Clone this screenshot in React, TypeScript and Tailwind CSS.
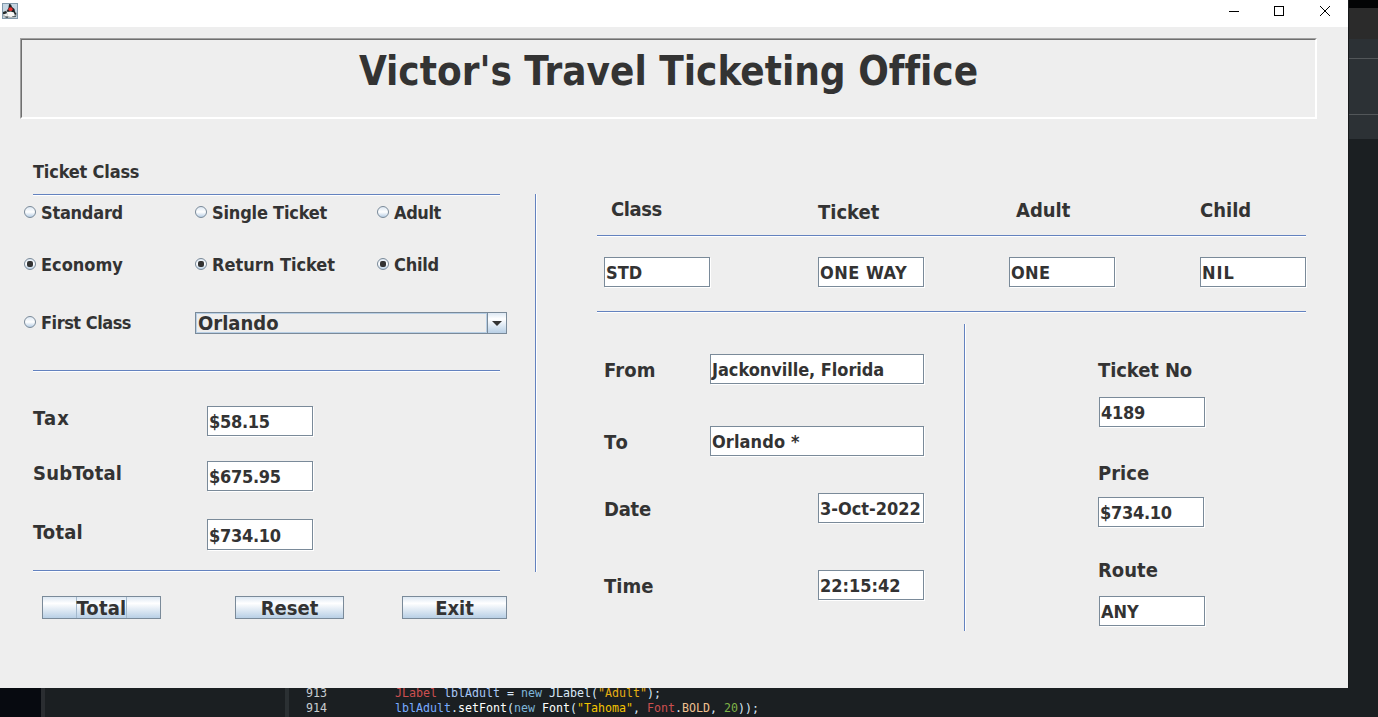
import type { ReactNode } from "react";

const ui = "font-['DejaVu_Sans_Condensed','DejaVu_Sans',sans-serif] [font-stretch:condensed] font-bold text-[#333] [font-variant-ligatures:none]";

function Rule({ className = "" }: { className?: string }) {
  return <div className={`h-0.5 shrink-0 border-t border-[#6382bf] bg-white ${className}`} />;
}

function Label({ children, className = "" }: { children: ReactNode; className?: string }) {
  return <div className={`h-6 shrink-0 whitespace-nowrap text-[20px] leading-6 ${className}`}>{children}</div>;
}

function Field({ value, className = "h-[30px] w-[106px] leading-[29px]" }: { value: string; className?: string }) {
  return (
    <div
      className={`shrink-0 overflow-hidden whitespace-nowrap border border-[#7a8a99] bg-white pl-px text-[18px] shadow-[1px_1px_0_#fff] ${className}`}
    >
      {value}
    </div>
  );
}

function Radio({ label, checked = false, className = "" }: { label: string; checked?: boolean; className?: string }) {
  return (
    <div className={`flex h-6 shrink-0 items-center gap-[5px] text-[18px] leading-6 whitespace-nowrap ${className}`}>
      <span className="flex size-3 items-center justify-center rounded-full border border-[#7a8a99] bg-linear-to-b from-[#dde8f3] via-white to-[#b8cfe5]">
        {checked && <span className="size-1.5 rounded-[2px] bg-[#333]" />}
      </span>
      <span className="pt-0.5">{label}</span>
    </div>
  );
}

function MetalButton({ label, focused = false, className = "" }: { label: string; focused?: boolean; className?: string }) {
  return (
    <button
      className={`flex h-[23px] shrink-0 justify-center border border-[#7a8a99] bg-linear-to-b from-[#dde8f3] via-white via-30% to-[#b8cfe5] text-[20px] leading-[22px] ${className}`}
    >
      <span className={focused ? "h-full border-x border-[#a3b8cc] tracking-[0.2px]" : "h-full"}>{label}</span>
    </button>
  );
}

function JavaIcon() {
  return (
    <svg width="16" height="16" viewBox="0 0 16 16">
      <rect x=".5" y=".5" width="15" height="15" fill="#c4d5e2" stroke="#8198aa" />
      <path d="M1 9 L5 7 L12 7 L15 10 V13 L12 15 H3 L1 13Z" fill="#aeb6ba" />
      <path d="M7 1 L9 1.5 L10 4 L12.5 6 L13 9 L14.5 11 L13 12 L11.5 9 H5.5 L5 7.5 L6.5 5Z" fill="#1c2224" />
      <path d="M1 9 L4 8 L5 9.5 L3 11 L1 11Z" fill="#252c2e" />
      <path d="M5 9 L9 8.5 L12 10 L12.5 13 L9 14 L6 13Z" fill="#f8f8f6" />
      <path d="M2 11 H5 L6 13 H3Z" fill="#eeefee" />
      <path d="M3 13.5 H6 V15 H4Z M10 13.5 L14 12.5 V14 H10Z" fill="#596367" />
      <ellipse cx="8.5" cy="6.2" rx="2.1" ry="1.9" fill="#e93030" />
    </svg>
  );
}

function TitleBar() {
  return (
    <div className="flex h-[27px] shrink-0 justify-between bg-white pt-[3px] pl-[2px]">
      <JavaIcon />
      <div className="flex pt-[3px] pr-[17px]">
        <svg width="102" height="11" viewBox="0 0 102 11" fill="none" stroke="#000" shapeRendering="crispEdges">
          <path d="M0 5.5H10M45.5 .5H54.5V9.5H45.5Z" />
          <path d="M91 0L101 10M101 0L91 10" shapeRendering="auto" />
        </svg>
      </div>
    </div>
  );
}

function TicketForm() {
  return (
    <div className="flex w-[535px] shrink-0 flex-col">
      <div className="mt-[41px] h-6 pl-[33px] text-[18px] leading-6 tracking-[-0.18px]">Ticket Class</div>
      <Rule className="mt-[10px] ml-[33px] w-[467px]" />
      <div className="mt-1 flex pl-6">
        <Radio label="Standard" className="w-[171px] tracking-[-0.25px]" />
        <Radio label="Single Ticket" className="w-[182px] tracking-[-0.2px]" />
        <Radio label="Adult" className="tracking-[-0.4px]" />
      </div>
      <div className="mt-7 flex pl-6">
        <Radio label="Economy" checked className="w-[171px]" />
        <Radio label="Return Ticket" checked className="w-[182px]" />
        <Radio label="Child" checked className="tracking-[-0.25px]" />
      </div>
      <div className="mt-[34px] flex items-end pl-6">
        <Radio label="First Class" className="w-[171px] tracking-[-0.48px]" />
        <div className="flex h-[22px] w-[312px] border border-[#7a8a99]">
          <div className="flex-1 border border-[#b8cfe5] pl-px text-[20px] leading-[19px]">Orlando</div>
          <div className="flex w-[19px] items-center justify-center border-l border-[#7a8a99] bg-linear-to-b from-[#dde8f3] via-white via-30% to-[#b8cfe5]">
            <svg width="10" height="5" viewBox="0 0 10 5">
              <path d="M0 0H10L5 5Z" fill="#333" />
            </svg>
          </div>
        </div>
      </div>
      <Rule className="mt-9 ml-[33px] w-[467px]" />
      <div className="mt-[34px] flex pl-[33px]">
        <Label className="w-[174px] tracking-[1.2px]">Tax</Label>
        <Field value="$58.15" className="h-[30px] w-[106px] leading-[29px] tracking-[-0.3px]" />
      </div>
      <div className="mt-[25px] flex pl-[33px]">
        <Label className="w-[174px] tracking-[0.2px]">SubTotal</Label>
        <Field value="$675.95" className="h-[30px] w-[106px] leading-[29px] tracking-[-0.28px]" />
      </div>
      <div className="mt-7 flex pl-[33px]">
        <Label className="mt-px w-[174px] tracking-[0.2px]">Total</Label>
        <Field value="$734.10" className="h-[31px] w-[106px] leading-[31px] tracking-[-0.28px]" />
      </div>
      <Rule className="mt-5 ml-[33px] w-[467px]" />
      <div className="mt-6 flex pl-[42px]">
        <MetalButton label="Total" focused className="w-[119px]" />
        <MetalButton label="Reset" className="ml-[74px] w-[109px]" />
        <MetalButton label="Exit" className="ml-[58px] w-[105px]" />
      </div>
    </div>
  );
}

function TicketSummary() {
  return (
    <div className="ml-[60px] flex w-[709px] flex-col pt-[78px]">
      <div className="flex h-[38px]">
        <Label className="w-[207px] pl-[14px] tracking-[-0.4px]">Class</Label>
        <Label className="mt-[3px] w-[198px] pl-[14px]">Ticket</Label>
        <Label className="mt-px w-[198px] pl-[14px]">Adult</Label>
        <Label className="mt-px">Child</Label>
      </div>
      <Rule />
      <div className="mt-5 flex pl-[7px]">
        <Field value="STD" />
        <Field value="ONE WAY" className="ml-[108px] h-[30px] w-[106px] leading-[29px] tracking-[0.5px]" />
        <Field value="ONE" className="ml-[85px] h-[30px] w-[106px] leading-[29px] tracking-[0.3px]" />
        <Field value="NIL" className="ml-[85px] h-[30px] w-[106px] leading-[29px] tracking-[1px]" />
      </div>
      <Rule className="mt-6" />
      <div className="mt-[11px] flex">
        <div className="w-[367px] pt-[30px] pl-[7px]">
          <div className="flex h-[72px]">
            <Label className="mt-1 w-[106px] tracking-[0.2px]">From</Label>
            <Field value="Jackonville, Florida" className="h-[30px] w-[214px] leading-[29px] tracking-[-0.05px]" />
          </div>
          <div className="flex h-[67px]">
            <Label className="mt-1 w-[106px] tracking-[2px]">To</Label>
            <Field value="Orlando *" className="h-[30px] w-[214px] leading-[29px] tracking-[0.1px]" />
          </div>
          <div className="flex h-[77px]">
            <Label className="mt-1 w-[214px] tracking-[-0.25px]">Date</Label>
            <Field value="3-Oct-2022" />
          </div>
          <div className="flex">
            <Label className="mt-1 w-[214px]">Time</Label>
            <Field value="22:15:42" />
          </div>
        </div>
        <div className="h-[307px] w-0.5 border-l border-[#6382bf] bg-white" />
        <div className="pt-[34px] pl-[132px]">
          <Label className="tracking-[-0.1px]">Ticket No</Label>
          <Field value="4189" className="mt-[15px] ml-px h-[30px] w-[106px] leading-[29px] tracking-[-0.3px]" />
          <Label className="mt-[34px]">Price</Label>
          <Field value="$734.10" className="mt-3 h-[30px] w-[106px] leading-[29px] tracking-[-0.28px]" />
          <Label className="mt-[31px]">Route</Label>
          <Field value="ANY" className="mt-[14px] ml-px h-[30px] w-[106px] leading-[29px]" />
        </div>
      </div>
    </div>
  );
}

function EditorStrip() {
  return (
    <div className="flex h-[29px] overflow-hidden bg-[#1b1f22] font-['DejaVu_Sans_Mono',monospace] text-[11.63px] whitespace-pre text-[#d9e8f7]">
      <div className="w-[41px] shrink-0 bg-[#070a10]" />
      <div className="w-1 shrink-0 bg-[#2a2d31]" />
      <div className="w-60 shrink-0" />
      <div className="w-1 shrink-0 bg-[#2b3033]" />
      <div className="ml-[17px] w-[89px] shrink-0 text-[#c8cdd0]">
        <div className="leading-[11px]">913</div>
        <div className="mt-[2px] leading-[15px]">914</div>
      </div>
      <div>
        <div className="leading-[11px]">
          <span className="text-[#cc4f50]">JLabel</span> <span className="text-[#a9c7f5]">lblAdult</span> = <span className="text-[#7eb6d9]">new</span> JLabel(<span className="text-[#e5ad12]">"Adult"</span>);
        </div>
        <div className="mt-[2px] leading-[15px]">
          <span className="text-[#79abff]">lblAdult</span>.<span className="text-white">setFont</span>(<span className="text-[#7eb6d9]">new</span> <span className="text-white">Font</span>(<span className="text-[#f5c400]">"Tahoma"</span>, <span className="text-[#cc4f50]">Font</span>.<span className="text-[#efc090]">BOLD</span>, <span className="text-[#7fb347]">20</span>));
        </div>
      </div>
    </div>
  );
}

export default function App() {
  return (
    <div className="h-[717px] w-[1378px] overflow-hidden bg-[#1b1f22]">
      <div className="flex h-[688px]">
        <main className={`flex w-[1348px] shrink-0 flex-col bg-[#eee] ${ui}`}>
          <TitleBar />
          <div className="mt-[11px] ml-5 h-[81px] w-[1297px] shrink-0 border border-t-[#a0a0a0] border-r-white border-b-white border-l-[#a0a0a0]">
            <h1 className="h-full border border-t-[#6f6f6f] border-r-white border-b-white border-l-[#6f6f6f] pt-[7px] text-center text-[40px] leading-[48px]">
              Victor's Travel Ticketing Office
            </h1>
          </div>
          <div className="flex">
            <TicketForm />
            <div className="mt-[75px] h-[378px] w-0.5 shrink-0 border-l border-[#6382bf] bg-white" />
            <TicketSummary />
          </div>
        </main>
        <aside className="flex w-[30px] flex-col border-l border-[#17191b]">
          <div className="h-2 bg-[#030405]" />
          <div className="h-[31px] bg-[#2b2b2b]" />
          <div className="h-5 border-b border-[#525659] bg-[#2c3135]" />
          <div className="h-14 border-b border-[#525659] bg-[#2c3135]" />
          <div className="h-6 bg-[#2c3135]" />
        </aside>
      </div>
      <EditorStrip />
    </div>
  );
}
